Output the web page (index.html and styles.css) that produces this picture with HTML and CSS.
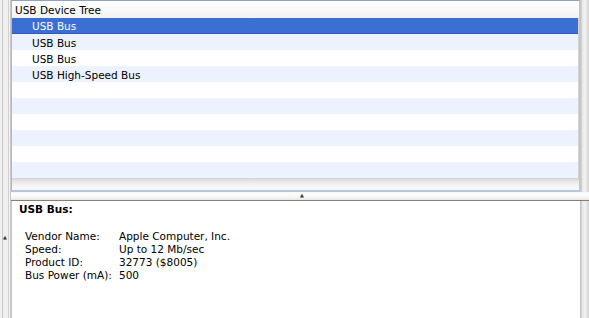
FILE: index.html
```html
<!DOCTYPE html>
<html>
<head>
<meta charset="utf-8">
<link rel="stylesheet" href="styles.css">
</head>
<body>
<div class="window">
  <div class="side side-left">
    <div class="side-arrow">&#9650;</div>
  </div>
  <div class="main">
    <div class="tree-panel">
      <div class="tree-header">USB Device Tree</div>
      <div class="tree-rows">
        <div class="row selected">USB Bus</div>
        <div class="row alt">USB Bus</div>
        <div class="row">USB Bus</div>
        <div class="row alt">USB High-Speed Bus</div>
        <div class="row"></div>
        <div class="row alt"></div>
        <div class="row"></div>
        <div class="row alt"></div>
        <div class="row"></div>
        <div class="row alt"></div>
      </div>
      <div class="tree-foot"></div>
    </div>
    <div class="splitter"><span class="grip">&#9650;</span></div>
    <div class="detail">
      <div class="detail-title">USB Bus:</div>
      <div class="props">
        <div class="k">Vendor Name:</div><div class="v">Apple Computer, Inc.</div>
        <div class="k">Speed:</div><div class="v">Up to 12 Mb/sec</div>
        <div class="k">Product ID:</div><div class="v">32773 ($8005)</div>
        <div class="k">Bus Power (mA):</div><div class="v">500</div>
      </div>
    </div>
  </div>
  <div class="side side-right"></div>
</div>
</body>
</html>
```

FILE: styles.css
```css
html, body {
  margin: 0;
  padding: 0;
}
body {
  width: 589px;
  height: 318px;
  overflow: hidden;
  background: #ececec;
  font-family: "DejaVu Sans", "Liberation Sans", sans-serif;
  font-size: 10.5px;
  color: #000;
}
.window {
  display: flex;
  height: 318px;
}
.side {
  flex: none;
  background: #ebebeb;
  position: relative;
}
.side-left {
  width: 11px;
  border-right: 1px solid #c9c9c9;
  box-sizing: border-box;
  background: linear-gradient(to right, #f0f0f0 0, #f0f0f0 2px, #c8c8c8 2px, #c8c8c8 3px, #efefef 3px, #efefef 8px, #d0d0d0 8px, #d0d0d0 9px, #f3f3f3 9px);
}
.side-arrow {
  position: absolute;
  left: 3px;
  top: 234px;
  font-size: 5px;
  color: #333;
}
.side-right {
  width: 9px;
  background: linear-gradient(to right, #d2d2d2 0, #bdbdbd 1px, #e6e6e6 2px, #f2f2f2 5px, #dadada 8px);
}
.main {
  flex: 1;
  display: flex;
  flex-direction: column;
  min-width: 0;
}
.tree-panel {
  height: 192px;
  box-sizing: border-box;
  border: 1px solid #a9b8cd;
  border-top-color: #8fa3c4;
  border-right-color: #c4c4c4;
  border-bottom: 2px solid #b3c7df;
  background: #fff;
  display: flex;
  flex-direction: column;
}
.tree-header {
  height: 16px;
  line-height: 16px;
  padding: 1px 0 0 3px;
  background: linear-gradient(#ffffff, #f1f3f1);
  flex: none;
}
.tree-rows {
  flex: none;
  border-right: 1px solid #d4d4d4;
}
.row {
  height: 16px;
  line-height: 18px;
  overflow: hidden;
  padding-left: 20px;
  background: #fff;
}
.row.alt {
  background: #edf3fe;
}
.row.selected {
  background: #3c6fd4;
  color: #fff;
  border-bottom: 1px solid #2f5bb5;
  height: 15px;
  line-height: 17px;
}
.tree-foot {
  flex: 1;
  background: linear-gradient(#d2d2d2 0, #e6e6e6 3px, #f6f6f6 8px);
}
.splitter {
  height: 8px;
  flex: none;
  position: relative;
  margin-right: -9px;
  z-index: 1;
  background: linear-gradient(#f4f7fb 0, #ffffff 2px, #f3f3f3 6px, #e6e6e6 8px);
  border-bottom: 1px solid #8d7e73;
}
.grip {
  position: absolute;
  left: 289px;
  top: 0;
  font-size: 5px;
  color: #333;
}
.detail {
  flex: 1;
  background: #fff;
  border-left: 1px solid #c7c7c7;
  padding: 1px 0 0 7px;
}
.detail-title {
  font-weight: bold;
  line-height: 14px;
}
.props {
  display: grid;
  grid-template-columns: 94px auto;
  justify-content: start;
  margin-top: 14px;
  margin-left: 6px;
  line-height: 13px;
}
```
